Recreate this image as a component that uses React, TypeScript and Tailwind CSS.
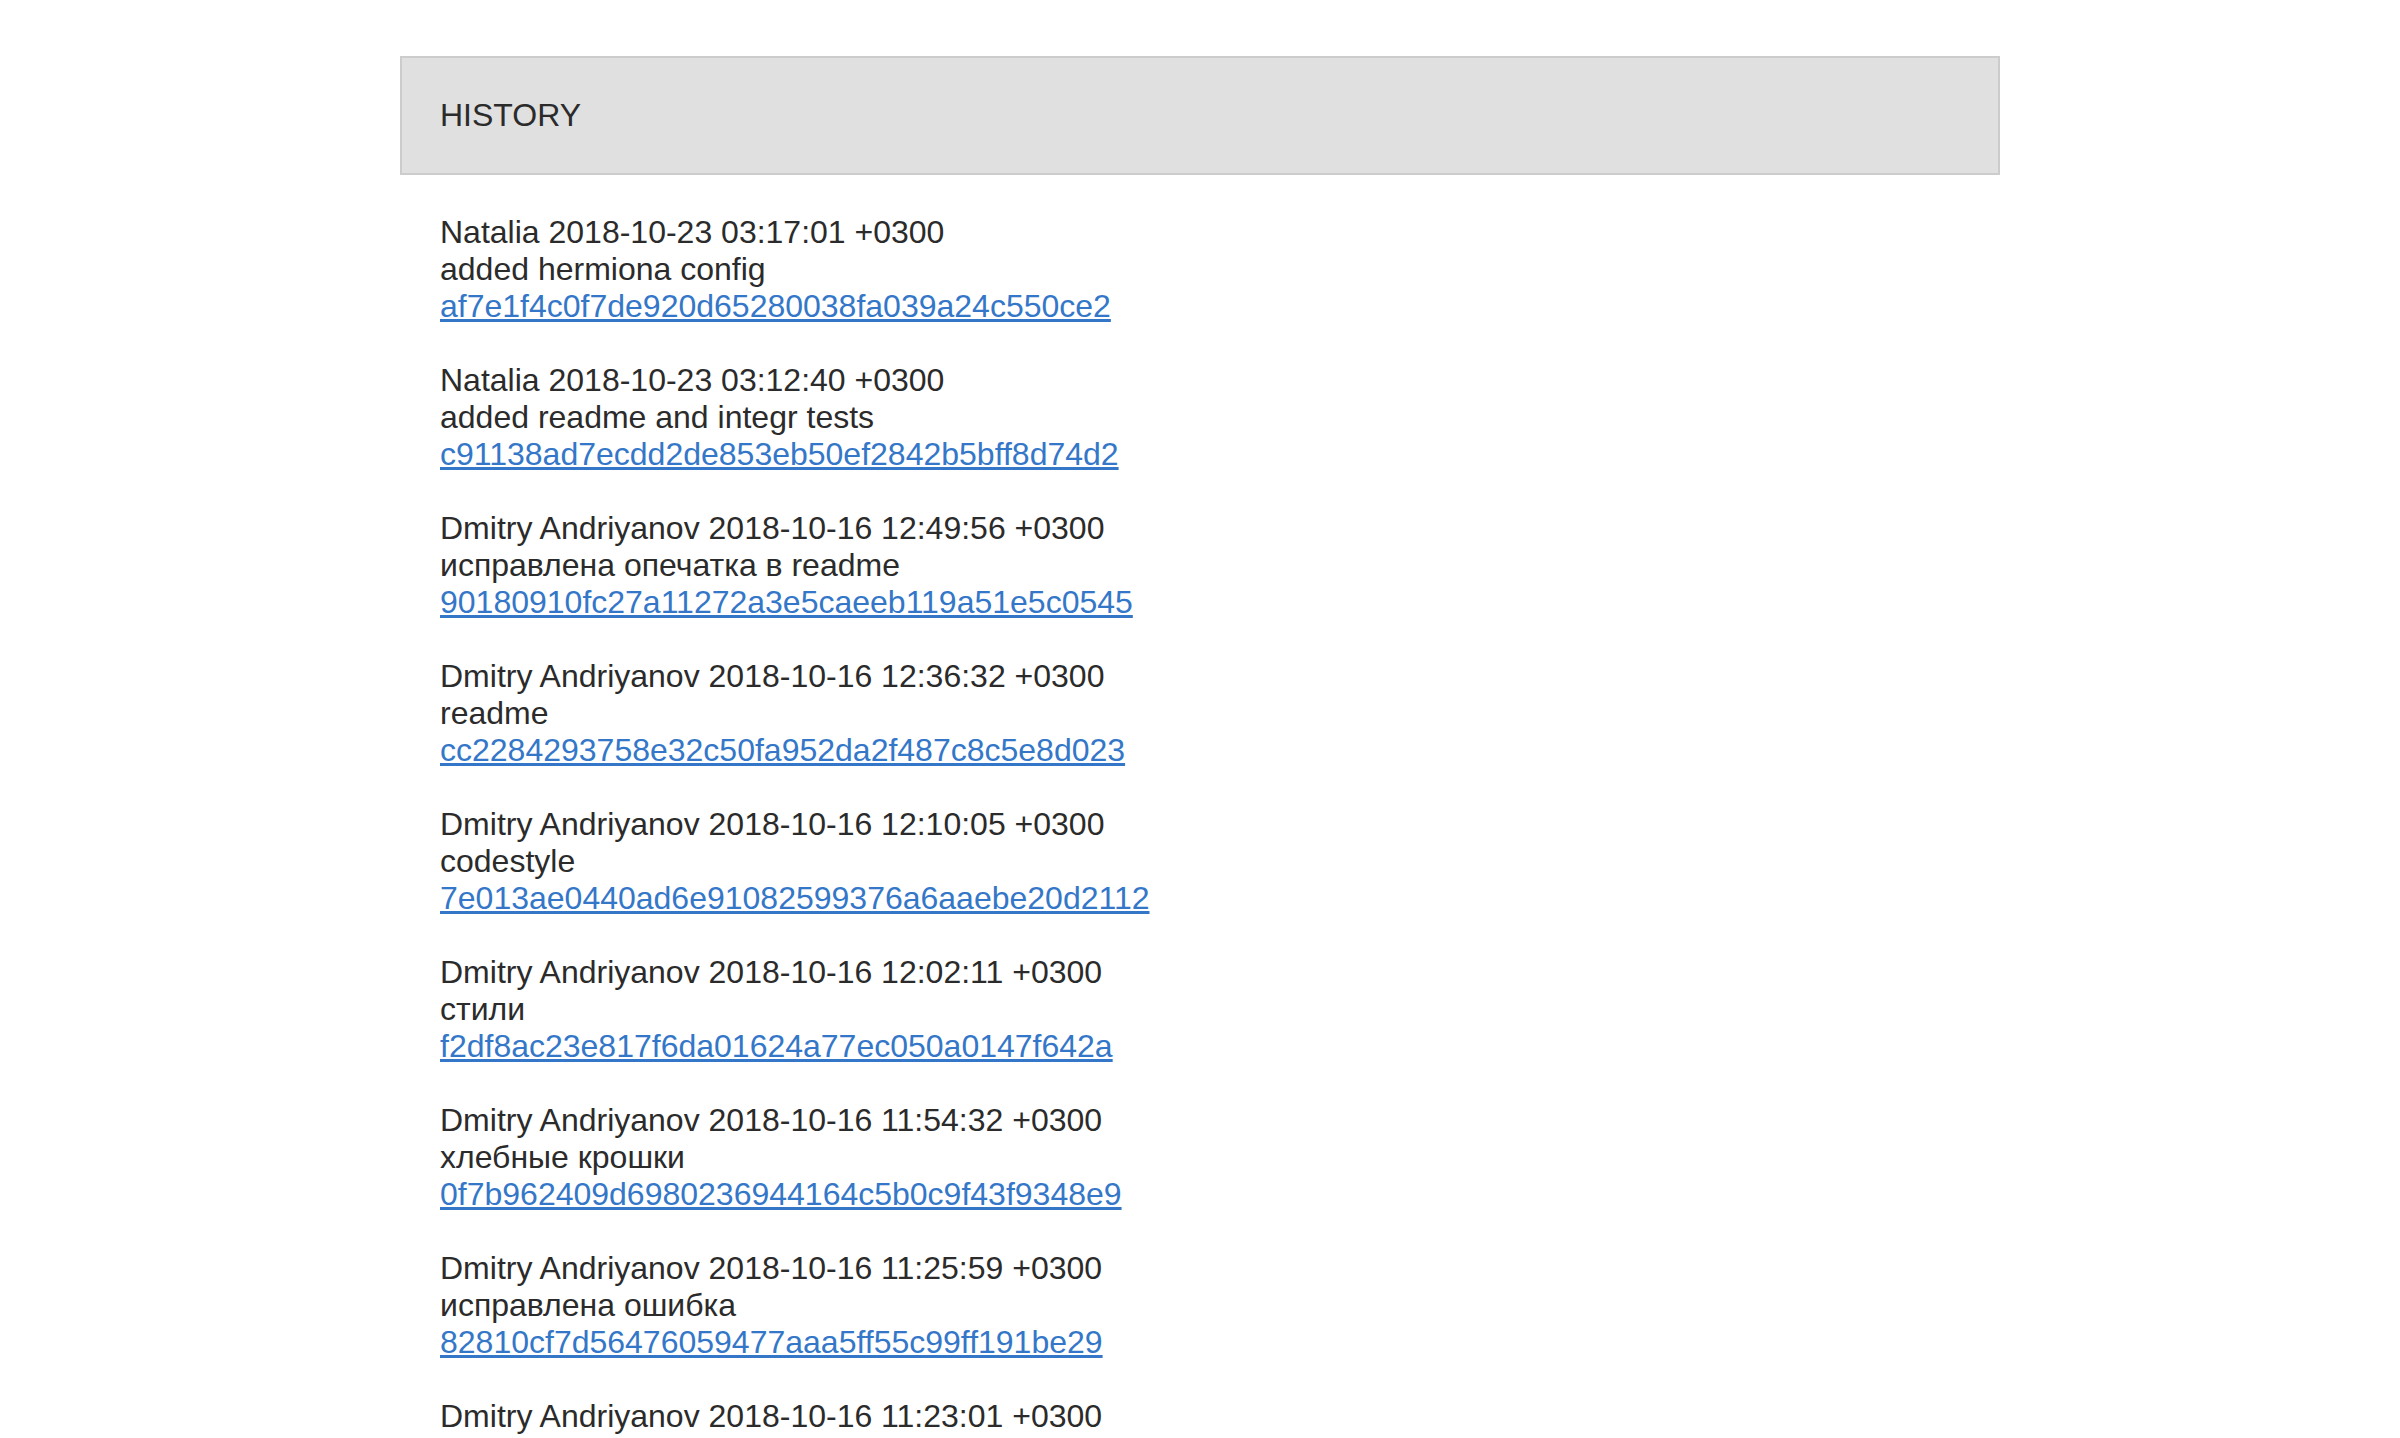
const commits = [
  {
    author: "Natalia",
    date: "2018-10-23 03:17:01 +0300",
    message: "added hermiona config",
    hash: "af7e1f4c0f7de920d65280038fa039a24c550ce2",
  },
  {
    author: "Natalia",
    date: "2018-10-23 03:12:40 +0300",
    message: "added readme and integr tests",
    hash: "c91138ad7ecdd2de853eb50ef2842b5bff8d74d2",
  },
  {
    author: "Dmitry Andriyanov",
    date: "2018-10-16 12:49:56 +0300",
    message: "исправлена опечатка в readme",
    hash: "90180910fc27a11272a3e5caeeb119a51e5c0545",
  },
  {
    author: "Dmitry Andriyanov",
    date: "2018-10-16 12:36:32 +0300",
    message: "readme",
    hash: "cc2284293758e32c50fa952da2f487c8c5e8d023",
  },
  {
    author: "Dmitry Andriyanov",
    date: "2018-10-16 12:10:05 +0300",
    message: "codestyle",
    hash: "7e013ae0440ad6e91082599376a6aaebe20d2112",
  },
  {
    author: "Dmitry Andriyanov",
    date: "2018-10-16 12:02:11 +0300",
    message: "стили",
    hash: "f2df8ac23e817f6da01624a77ec050a0147f642a",
  },
  {
    author: "Dmitry Andriyanov",
    date: "2018-10-16 11:54:32 +0300",
    message: "хлебные крошки",
    hash: "0f7b962409d6980236944164c5b0c9f43f9348e9",
  },
  {
    author: "Dmitry Andriyanov",
    date: "2018-10-16 11:25:59 +0300",
    message: "исправлена ошибка",
    hash: "82810cf7d56476059477aaa5ff55c99ff191be29",
  },
  {
    author: "Dmitry Andriyanov",
    date: "2018-10-16 11:23:01 +0300",
    message: "",
    hash: "",
  },
]

export default function App() {
  return (
    <div className="min-h-screen bg-white text-[#2b2b2b] font-['Liberation_Sans',Arial,sans-serif]">
      <div className="w-[1600px] mx-auto pt-[56px]">
        {/* Header */}
        <header className="h-[119px] flex items-center px-[38px] bg-[#e0e0e0] border-2 border-[#cccccc]">
          <h1 className="text-[32px] leading-[37px] font-normal">HISTORY</h1>
        </header>

        {/* Commit list */}
        <ul className="mt-[39px] pl-[40px] text-[32px] leading-[37px]">
          {commits.map((c, i) => (
            <li key={i} className="mb-[37px]">
              <div>
                {c.author} {c.date}
              </div>
              {c.message && <div>{c.message}</div>}
              {c.hash && (
                <a href="#" className="text-[#3477c8] underline">
                  {c.hash}
                </a>
              )}
            </li>
          ))}
        </ul>
      </div>
    </div>
  )
}
